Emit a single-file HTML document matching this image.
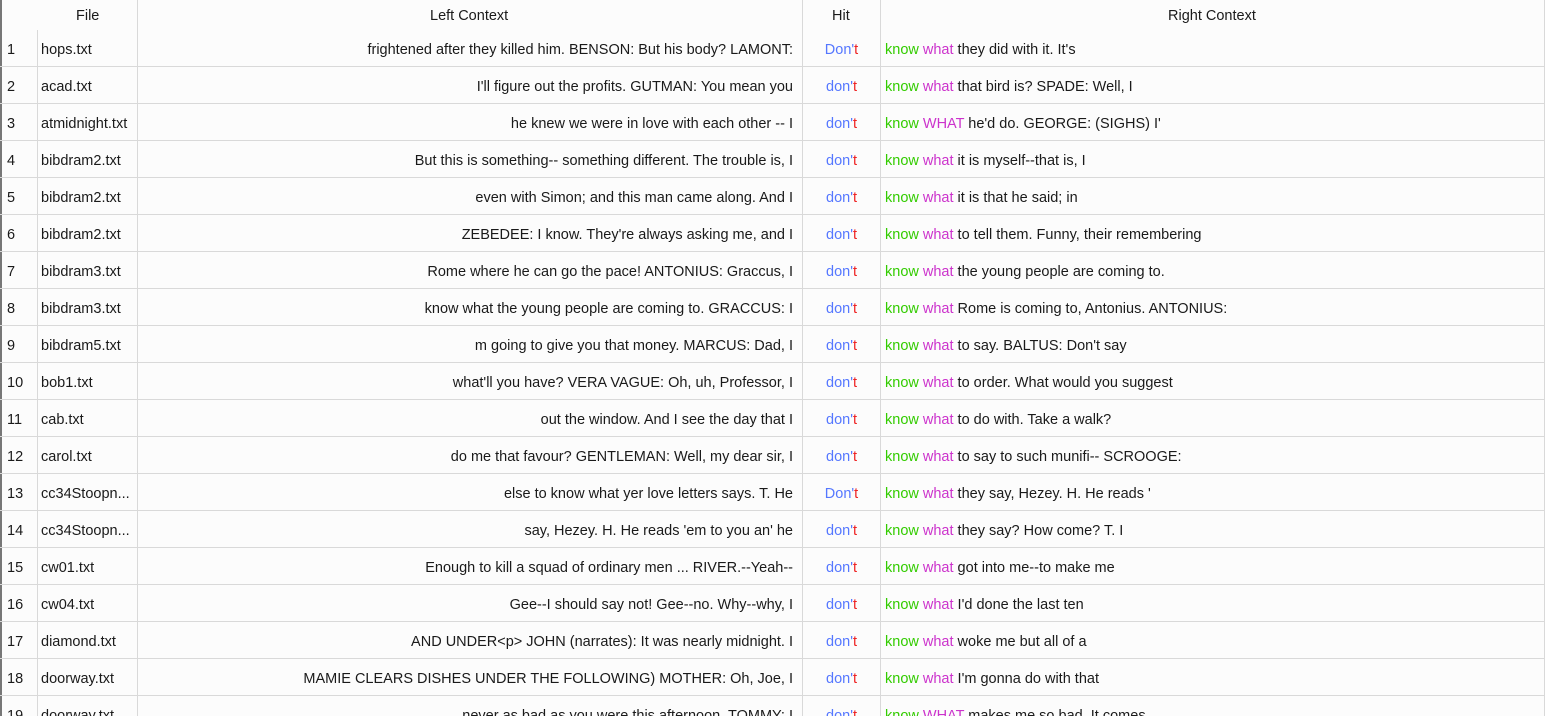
<!DOCTYPE html>
<html style="overflow:hidden;height:716px"><head><meta charset="utf-8"><style>
html,body{overflow:hidden;height:716px}
body{margin:0;width:1545px;background:#fcfcfc;font-family:"Liberation Sans",sans-serif;font-size:14.5px;color:#1a1a1a;position:relative}
.l{position:absolute;top:0;height:716px;width:1px;background:#d9d9d9}
.r{position:absolute;left:0;width:1545px;height:37px;border-bottom:1px solid #d9d9d9;box-sizing:border-box}
.r div{position:absolute;top:2px;line-height:36px;white-space:nowrap;overflow:hidden}
.n{left:7px}.f{left:41px;width:94px}.lc{left:140px;width:653px;text-align:right}
.h{left:803px;width:77px;text-align:center}.rc{left:885px}
.b{color:#5577ff}.t{color:#ee2222}.g{color:#33cc00}.m{color:#cc33cc}
.hd{position:absolute;top:1px;line-height:31px}
</style></head><body>
<div style="position:absolute;left:0;top:0;width:2px;height:716px;background:#777"></div>
<div class="l" style="left:37px;top:30px;height:686px"></div>
<div class="l" style="left:137px"></div>
<div class="l" style="left:802px"></div>
<div class="l" style="left:880px"></div>
<div class="l" style="left:1544px"></div>
<div class="hd" style="left:76px">File</div>
<div class="hd" style="left:430px">Left Context</div>
<div class="hd" style="left:832px">Hit</div>
<div class="hd" style="left:1168px">Right Context</div>

<div class="r" style="top:30px"><div class="n">1</div><div class="f">hops.txt</div><div class="lc">frightened after they killed him. BENSON: But his body? LAMONT:</div><div class="h"><span class="b">Don'</span><span class="t">t</span></div><div class="rc"><span class="g">know</span> <span class="m">what</span> they did with it. It's</div></div>
<div class="r" style="top:67px"><div class="n">2</div><div class="f">acad.txt</div><div class="lc">I'll figure out the profits. GUTMAN: You mean you</div><div class="h"><span class="b">don'</span><span class="t">t</span></div><div class="rc"><span class="g">know</span> <span class="m">what</span> that bird is? SPADE: Well, I</div></div>
<div class="r" style="top:104px"><div class="n">3</div><div class="f">atmidnight.txt</div><div class="lc">he knew we were in love with each other -- I</div><div class="h"><span class="b">don'</span><span class="t">t</span></div><div class="rc"><span class="g">know</span> <span class="m">WHAT</span> he'd do. GEORGE: (SIGHS) I'</div></div>
<div class="r" style="top:141px"><div class="n">4</div><div class="f">bibdram2.txt</div><div class="lc">But this is something-- something different. The trouble is, I</div><div class="h"><span class="b">don'</span><span class="t">t</span></div><div class="rc"><span class="g">know</span> <span class="m">what</span> it is myself--that is, I</div></div>
<div class="r" style="top:178px"><div class="n">5</div><div class="f">bibdram2.txt</div><div class="lc">even with Simon; and this man came along. And I</div><div class="h"><span class="b">don'</span><span class="t">t</span></div><div class="rc"><span class="g">know</span> <span class="m">what</span> it is that he said; in</div></div>
<div class="r" style="top:215px"><div class="n">6</div><div class="f">bibdram2.txt</div><div class="lc">ZEBEDEE: I know. They're always asking me, and I</div><div class="h"><span class="b">don'</span><span class="t">t</span></div><div class="rc"><span class="g">know</span> <span class="m">what</span> to tell them. Funny, their remembering</div></div>
<div class="r" style="top:252px"><div class="n">7</div><div class="f">bibdram3.txt</div><div class="lc">Rome where he can go the pace! ANTONIUS: Graccus, I</div><div class="h"><span class="b">don'</span><span class="t">t</span></div><div class="rc"><span class="g">know</span> <span class="m">what</span> the young people are coming to.</div></div>
<div class="r" style="top:289px"><div class="n">8</div><div class="f">bibdram3.txt</div><div class="lc">know what the young people are coming to. GRACCUS: I</div><div class="h"><span class="b">don'</span><span class="t">t</span></div><div class="rc"><span class="g">know</span> <span class="m">what</span> Rome is coming to, Antonius. ANTONIUS:</div></div>
<div class="r" style="top:326px"><div class="n">9</div><div class="f">bibdram5.txt</div><div class="lc">m going to give you that money. MARCUS: Dad, I</div><div class="h"><span class="b">don'</span><span class="t">t</span></div><div class="rc"><span class="g">know</span> <span class="m">what</span> to say. BALTUS: Don't say</div></div>
<div class="r" style="top:363px"><div class="n">10</div><div class="f">bob1.txt</div><div class="lc">what'll you have? VERA VAGUE: Oh, uh, Professor, I</div><div class="h"><span class="b">don'</span><span class="t">t</span></div><div class="rc"><span class="g">know</span> <span class="m">what</span> to order. What would you suggest</div></div>
<div class="r" style="top:400px"><div class="n">11</div><div class="f">cab.txt</div><div class="lc">out the window. And I see the day that I</div><div class="h"><span class="b">don'</span><span class="t">t</span></div><div class="rc"><span class="g">know</span> <span class="m">what</span> to do with. Take a walk?</div></div>
<div class="r" style="top:437px"><div class="n">12</div><div class="f">carol.txt</div><div class="lc">do me that favour? GENTLEMAN: Well, my dear sir, I</div><div class="h"><span class="b">don'</span><span class="t">t</span></div><div class="rc"><span class="g">know</span> <span class="m">what</span> to say to such munifi-- SCROOGE:</div></div>
<div class="r" style="top:474px"><div class="n">13</div><div class="f">cc34Stoopn...</div><div class="lc">else to know what yer love letters says. T. He</div><div class="h"><span class="b">Don'</span><span class="t">t</span></div><div class="rc"><span class="g">know</span> <span class="m">what</span> they say, Hezey. H. He reads '</div></div>
<div class="r" style="top:511px"><div class="n">14</div><div class="f">cc34Stoopn...</div><div class="lc">say, Hezey. H. He reads 'em to you an' he</div><div class="h"><span class="b">don'</span><span class="t">t</span></div><div class="rc"><span class="g">know</span> <span class="m">what</span> they say? How come? T. I</div></div>
<div class="r" style="top:548px"><div class="n">15</div><div class="f">cw01.txt</div><div class="lc">Enough to kill a squad of ordinary men ... RIVER.--Yeah--</div><div class="h"><span class="b">don'</span><span class="t">t</span></div><div class="rc"><span class="g">know</span> <span class="m">what</span> got into me--to make me</div></div>
<div class="r" style="top:585px"><div class="n">16</div><div class="f">cw04.txt</div><div class="lc">Gee--I should say not! Gee--no. Why--why, I</div><div class="h"><span class="b">don'</span><span class="t">t</span></div><div class="rc"><span class="g">know</span> <span class="m">what</span> I'd done the last ten</div></div>
<div class="r" style="top:622px"><div class="n">17</div><div class="f">diamond.txt</div><div class="lc">AND UNDER&lt;p&gt; JOHN (narrates): It was nearly midnight. I</div><div class="h"><span class="b">don'</span><span class="t">t</span></div><div class="rc"><span class="g">know</span> <span class="m">what</span> woke me but all of a</div></div>
<div class="r" style="top:659px"><div class="n">18</div><div class="f">doorway.txt</div><div class="lc">MAMIE CLEARS DISHES UNDER THE FOLLOWING) MOTHER: Oh, Joe, I</div><div class="h"><span class="b">don'</span><span class="t">t</span></div><div class="rc"><span class="g">know</span> <span class="m">what</span> I'm gonna do with that</div></div>
<div class="r" style="top:696px;height:20px;border:0"><div class="n">19</div><div class="f">doorway.txt</div><div class="lc">never as bad as you were this afternoon. TOMMY: I</div><div class="h"><span class="b">don'</span><span class="t">t</span></div><div class="rc"><span class="g">know</span> <span class="m">WHAT</span> makes me so bad. It comes</div></div>
</body></html>
